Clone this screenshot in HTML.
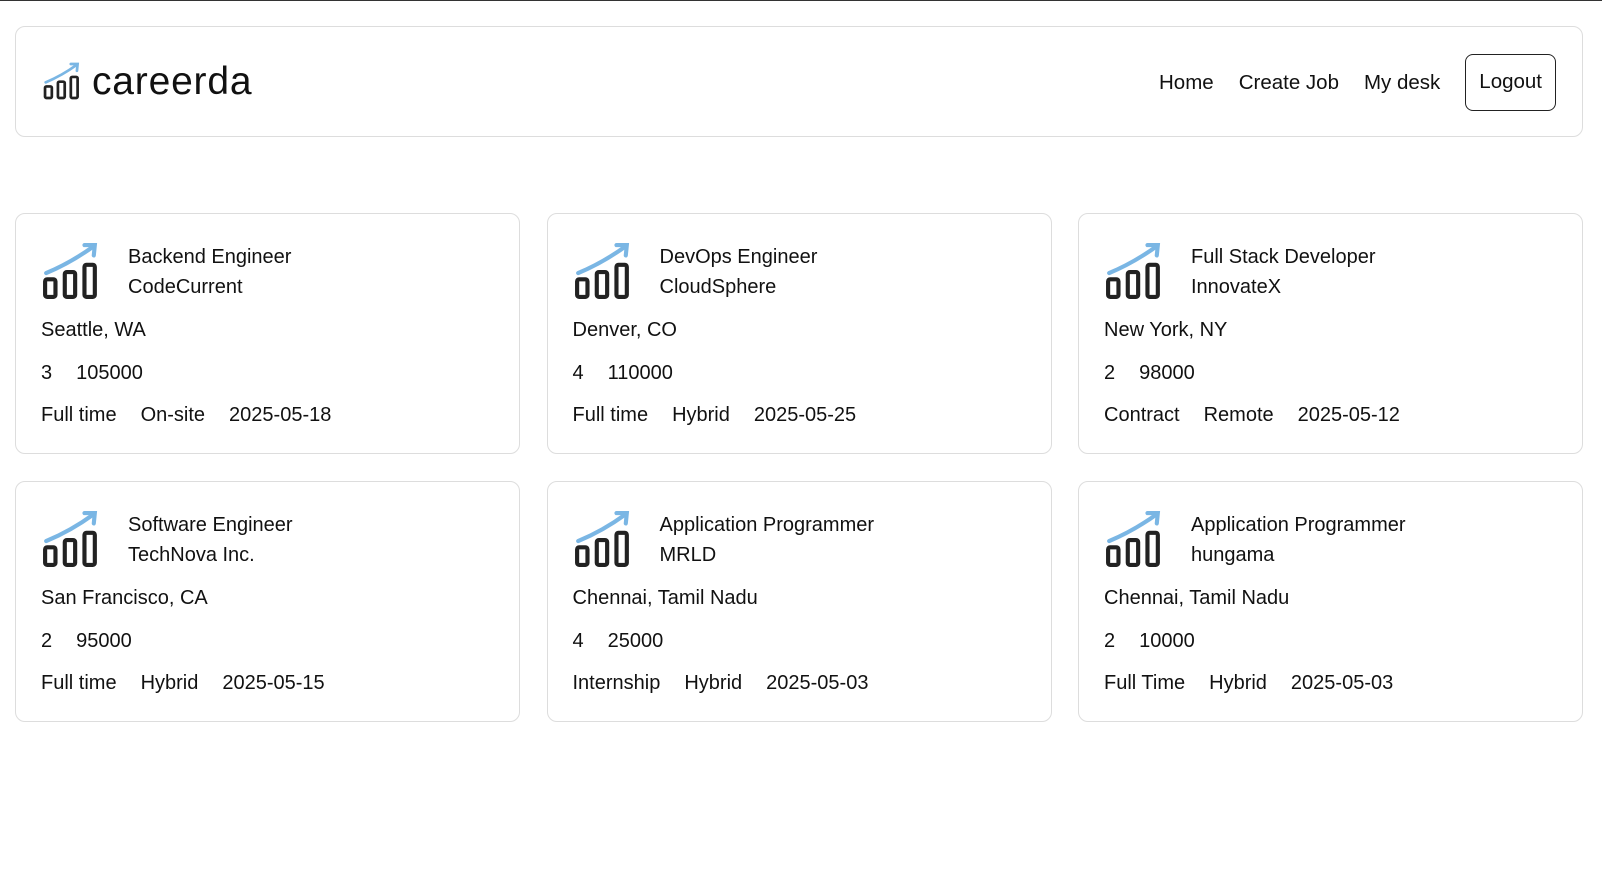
<!DOCTYPE html>
<html><head><style>
*{box-sizing:border-box;margin:0;padding:0}
body{width:1602px;height:870px;background:#fff;font-family:"Liberation Sans",sans-serif;color:#111;position:relative;border-top:1px solid #333;overflow:hidden}
.nav{position:absolute;left:15px;top:25px;width:1568px;height:111px;border:1px solid #ddd;border-radius:10px}
.logo{position:absolute;left:26px;top:35px}
.brand{position:absolute;left:76px;top:33px;font-size:39px;letter-spacing:0.8px}
.links{position:absolute;right:26px;top:27px;display:flex;align-items:center;font-size:20.5px}
.links span{margin-right:25px}
.btn{border:1px solid #222;border-radius:8px;padding:15px 13px;height:57px}
.card{position:absolute;width:505px;height:241px;border:1px solid #ddd;border-radius:10px;font-size:20px}
.card svg{position:absolute;left:26px;top:28px}
.t{position:absolute;left:112px;top:28px;line-height:30px}
.l{position:absolute;left:25px;top:105px}
.n{position:absolute;left:25px;top:148px}
.m{position:absolute;left:25px;top:190px}
.n b,.m b{font-weight:normal;margin-right:24px}
</style></head><body>
<div class="nav">
<svg class="logo" width="40" height="38" viewBox="0 0 56 56"><path d="M4 30 Q28 20 50 4" stroke="#7ab6e4" stroke-width="4" fill="none" stroke-linecap="round"/><path d="M41 3 L51 3 L50 13" stroke="#7ab6e4" stroke-width="4" fill="none" stroke-linecap="round"/><rect x="3" y="36" width="10" height="17" rx="2" fill="none" stroke="#222" stroke-width="4"/><rect x="22" y="29" width="10" height="24" rx="2" fill="none" stroke="#222" stroke-width="4"/><rect x="41" y="22" width="10" height="31" rx="2" fill="none" stroke="#222" stroke-width="4"/></svg>
<div class="brand">careerda</div>
<div class="links"><span>Home</span><span>Create Job</span><span>My desk</span><div class="btn">Logout</div></div>
</div>
<div id="c"></div>
<script>
const d=[["Backend Engineer","CodeCurrent","Seattle, WA","3","105000","Full time","On-site","2025-05-18"],
["DevOps Engineer","CloudSphere","Denver, CO","4","110000","Full time","Hybrid","2025-05-25"],
["Full Stack Developer","InnovateX","New York, NY","2","98000","Contract","Remote","2025-05-12"],
["Software Engineer","TechNova Inc.","San Francisco, CA","2","95000","Full time","Hybrid","2025-05-15"],
["Application Programmer","MRLD","Chennai, Tamil Nadu","4","25000","Internship","Hybrid","2025-05-03"],
["Application Programmer","hungama","Chennai, Tamil Nadu","2","10000","Full Time","Hybrid","2025-05-03"]];
const ic='<svg width="58" height="58" viewBox="0 0 56 56"><path d="M4 30 Q28 20 50 4" stroke="#7ab6e4" stroke-width="4" fill="none" stroke-linecap="round"/><path d="M41 3 L51 3 L50 13" stroke="#7ab6e4" stroke-width="4" fill="none" stroke-linecap="round"/><rect x="3" y="36" width="10" height="17" rx="2" fill="none" stroke="#222" stroke-width="4"/><rect x="22" y="29" width="10" height="24" rx="2" fill="none" stroke="#222" stroke-width="4"/><rect x="41" y="22" width="10" height="31" rx="2" fill="none" stroke="#222" stroke-width="4"/></svg>';
let h='';d.forEach((r,i)=>{const x=15+(i%3)*531.5,y=212+Math.floor(i/3)*268;
h+=`<div class="card" style="left:${x}px;top:${y}px">${ic}<div class="t">${r[0]}<br>${r[1]}</div><div class="l">${r[2]}</div><div class="n"><b>${r[3]}</b>${r[4]}</div><div class="m"><b>${r[5]}</b><b>${r[6]}</b>${r[7]}</div></div>`});
document.getElementById('c').innerHTML=h;
</script>
</body></html>
